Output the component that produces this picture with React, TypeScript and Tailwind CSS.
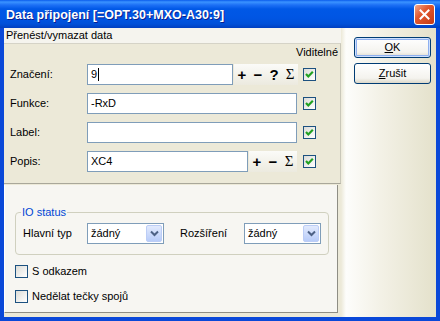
import React from 'react';

const font = "font-['Liberation_Sans',Arial,sans-serif]";

function CheckBox({ checked }: { checked?: boolean }) {
  return (
    <div className="w-[13px] h-[13px] border border-[#1c5180] bg-[linear-gradient(135deg,#dcdcd7,#ffffff)] shrink-0">
      {checked && (
        <svg width="11" height="11" viewBox="0 0 11 11">
          <polyline points="2,5 4.3,7.4 8.8,2.8" fill="none" stroke="#21a121" strokeWidth="2.2" />
        </svg>
      )}
    </div>
  );
}

function ToolBtn({ children, serif }: { children: React.ReactNode; serif?: boolean }) {
  return (
    <div
      className={`w-[16px] h-[21px] flex items-center justify-center bg-[linear-gradient(to_bottom,#fbfbf8,#eceadf)] text-[15px] leading-none ${
        serif ? "font-['Liberation_Serif',serif] font-normal" : 'font-bold'
      }`}
    >
      {children}
    </div>
  );
}

function FieldRow({
  label,
  value,
  width,
  buttons,
  caret,
}: {
  label: string;
  value: string;
  width: number;
  buttons?: string[];
  caret?: boolean;
}) {
  return (
    <div className="flex items-center h-[21px]">
      <span className="w-[83px] shrink-0 pl-[6px]">{label}</span>
      <div
        className="h-[21px] shrink-0 border border-[#7f9db9] bg-white pl-[3px] flex items-center"
        style={{ width }}
      >
        <span>{value}</span>
        {caret && <span className="w-px h-[13px] bg-black ml-px" />}
      </div>
      {buttons && (
        <div className="flex ml-px">
          {buttons.map((b) => (
            <ToolBtn key={b} serif={b === 'Σ'}>
              {b}
            </ToolBtn>
          ))}
        </div>
      )}
      <div className="flex-1" />
      <div className="w-[37px] shrink-0">
        <CheckBox checked />
      </div>
    </div>
  );
}

function Combo() {
  return (
    <div className="w-[77px] h-[21px] border border-[#7f9db9] bg-white flex items-center pl-[3px] pr-px">
      <span className="flex-1">žádný</span>
      <div className="w-[16px] h-[17px] rounded-[2px] border border-[#bccdf6] bg-[linear-gradient(to_bottom,#e2eafd,#b8ccf9)] flex items-center justify-center">
        <svg width="9" height="7" viewBox="0 0 9 7">
          <polyline points="1,1.5 4.5,5 8,1.5" fill="none" stroke="#4d6185" strokeWidth="2" />
        </svg>
      </div>
    </div>
  );
}

function XpButton({ children, isDefault }: { children: React.ReactNode; isDefault?: boolean }) {
  return (
    <div
      className={`w-[77px] h-[21px] rounded-[3px] border border-[#003c74] bg-[linear-gradient(to_bottom,#ffffff,#f4f3ee_75%,#dcd8ca)] flex items-center justify-center ${
        isDefault ? 'shadow-[inset_0_0_0_1px_#cee0fd,inset_0_0_0_2px_#8fb0ef]' : ''
      }`}
    >
      {children}
    </div>
  );
}

export default function App() {
  return (
    <div className={`w-[440px] h-[321px] flex flex-col bg-[#0a48d8] ${font} text-[11px] leading-[13px] text-black`}>
      {/* titulek */}
      <div className="h-[28px] shrink-0 flex items-center pl-[6px] pr-[5px] pt-px bg-[linear-gradient(to_bottom,#0a5cec_0px,#3a93ff_2px,#1d70f5_5px,#0058e6_9px,#0055e3_18px,#0050d8_24px,#003fc0_28px)]">
        <span className="flex-1 text-white font-bold text-[12.5px] leading-[16px] [text-shadow:1px_1px_0_#0a1f8f]">
          Data připojení [=OPT.30+MXO-A30:9]
        </span>
        <div className="w-[21px] h-[21px] rounded-[3px] border border-white bg-[linear-gradient(135deg,#f1a88d,#e2582f_40%,#c23a14)] flex items-center justify-center">
          <svg width="11" height="11" viewBox="0 0 11 11">
            <path d="M1.5 1.5 L9.5 9.5 M9.5 1.5 L1.5 9.5" stroke="white" strokeWidth="2" strokeLinecap="square" />
          </svg>
        </div>
      </div>

      {/* obsah */}
      <div className="flex-1 flex mx-[4px] mb-[4px] bg-[#ece9d8]">
        <div className="w-[337px] flex flex-col">
          <div className="h-[15px] bg-[#f5f4ee] pl-[2px] flex items-center">Přenést/vymazat data</div>

          <div className="h-[141px] border-t border-t-[#d5d3c7] border-b border-b-[#a9a79a] border-r border-r-[#c9c7b9] flex flex-col">
            <div className="h-[20px] flex justify-end pr-[2px] pt-[2px]">Viditelné</div>
            <div className="flex flex-col gap-[8px]">
              <FieldRow label="Značení:" value="9" caret width={146} buttons={['+', '−', '?', 'Σ']} />
              <FieldRow label="Funkce:" value="-RxD" width={210} />
              <FieldRow label="Label:" value="" width={210} />
              <FieldRow label="Popis:" value="XC4" width={161} buttons={['+', '−', 'Σ']} />
            </div>
          </div>

          <div className="h-[128px] mt-px mr-[3px] bg-[#f7f6f2] border-l border-l-white border-r border-r-[#8e8d84] border-b border-b-[#8e8d84] pl-[10px] pt-[21px]">
            <fieldset className="w-[313px] rounded-[4px] border border-[#d0d0bf] px-[7px] pb-[10px]">
              <legend className="px-px -ml-[2px] text-[#0046d5]">IO status</legend>
              <div className="flex items-center pt-[4px]">
                <span className="w-[64px]">Hlavní typ</span>
                <Combo />
                <span className="w-[64px] ml-[16px]">Rozšíření</span>
                <Combo />
              </div>
            </fieldset>
            <div className="flex items-center h-[13px] mt-[10px]">
              <CheckBox />
              <span className="ml-[4px]">S odkazem</span>
            </div>
            <div className="flex items-center h-[13px] mt-[12px]">
              <CheckBox />
              <span className="ml-[4px]">Nedělat tečky spojů</span>
            </div>
          </div>
        </div>

        <div className="flex-1 flex flex-col pt-[9px] pl-[13px] gap-[5px] bg-[linear-gradient(to_right,#ece9d8_0px,#fdfdfb_5px,#f3f1e6_40px,#e4e1cb_100%)]">
          <XpButton isDefault>
            <span>
              <span className="underline">O</span>K
            </span>
          </XpButton>
          <XpButton>
            <span>
              <span className="underline">Z</span>rušit
            </span>
          </XpButton>
        </div>
      </div>
    </div>
  );
}
